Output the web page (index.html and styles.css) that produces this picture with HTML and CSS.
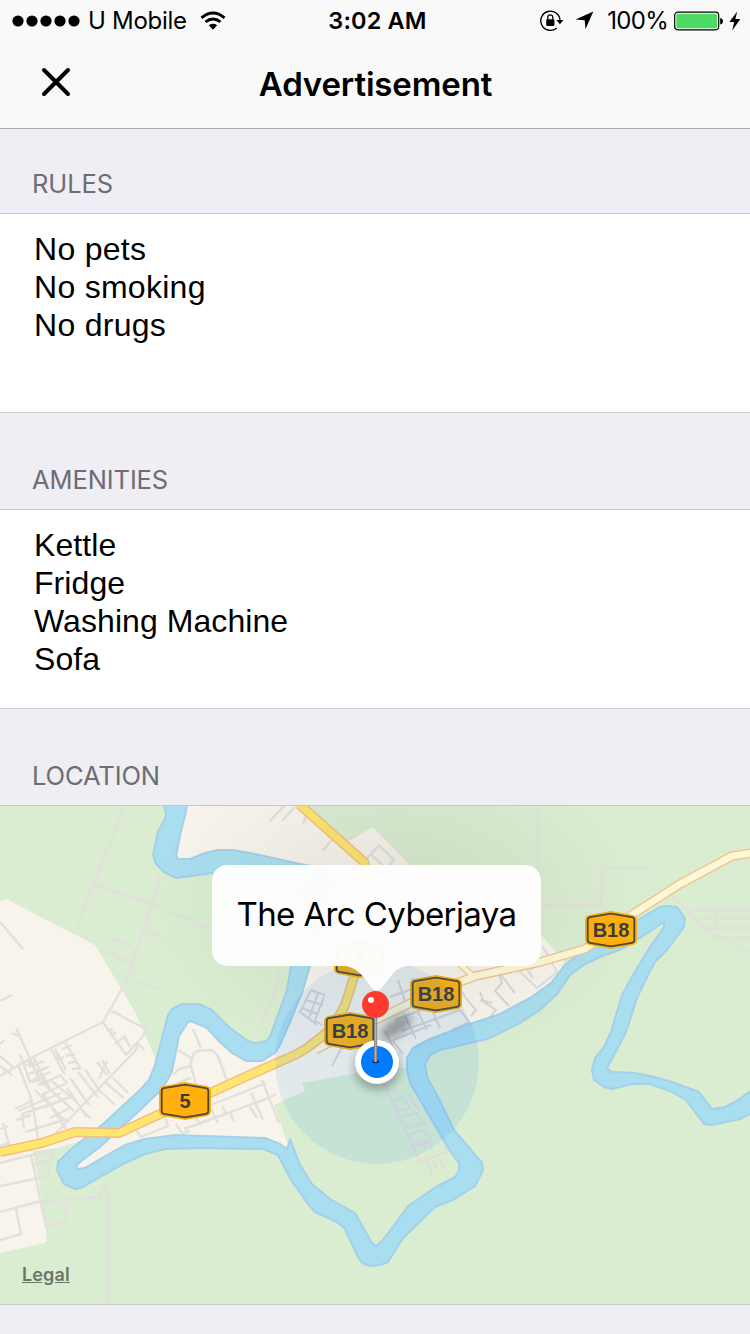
FILE: index.html
```html
<!DOCTYPE html>
<html lang="en">
<head>
<meta charset="utf-8">
<title>Advertisement</title>
<link rel="stylesheet" href="styles.css">
</head>
<body>
<header class="top">
  <div class="status">
    <div class="status-left">
      <svg class="signal" width="68" height="12" viewBox="0 0 68 12"><circle cx="6" cy="6" r="5.6"/><circle cx="20" cy="6" r="5.6"/><circle cx="34" cy="6" r="5.6"/><circle cx="48" cy="6" r="5.6"/><circle cx="62" cy="6" r="5.6"/></svg>
      <span class="carrier">U Mobile</span>
      <svg class="wifi" width="26" height="20" viewBox="0 0 26 20"><g fill="none" stroke="#000" stroke-width="2.9"><path d="M1.5 6.8Q13 -2.8 24.5 6.8"/><path d="M5.5 10.9Q13 4.9 20.5 10.9"/></g><path d="M8.8 14.2Q13 11.3 17.2 14.2L13 18.8Z"/></svg>
    </div>
    <span class="time">3:02 AM</span>
    <div class="status-right">
      <svg class="lock" width="24" height="22" viewBox="0 0 24 22"><path d="M16.8 17.9A9.6 9.6 0 1 1 20 10.5" fill="none" stroke="#000" stroke-width="1.4"/><path d="M16.3 10h7.2l-3.6 4.2z"/><rect x="6.2" y="9.3" width="8.2" height="6.6" rx=".8"/><path d="M7.8 9.5V7.3a2.5 2.5 0 0 1 5 0V9.5" fill="none" stroke="#000" stroke-width="1.3"/></svg>
      <svg class="arrow" width="19" height="19" viewBox="0 0 19 19"><path d="M18.3.5L10.5 18.3 9.7 9.3.5 8.4Z"/></svg>
      <span class="percent">100%</span>
      <svg class="battery" width="50" height="20" viewBox="0 0 50 20"><rect x=".7" y="1.2" width="44" height="17.6" rx="3.2" fill="#fff" stroke="#000" stroke-width="1.2"/><rect x="2.3" y="2.7" width="40.8" height="14.6" rx="1.6" fill="#4cd964"/><path d="M46.2 7q2.7.5 2.7 3.2t-2.7 3.2z"/></svg>
      <svg class="bolt" width="12" height="20" viewBox="0 0 12 20"><path d="M8.2.4L.4 11H5.2L3.2 19.4 11.4 8H6.4Z"/></svg>
    </div>
  </div>
  <div class="navbar">
    <svg class="close" width="30" height="30" viewBox="0 0 30 30"><path d="M3 3L27 27M27 3L3 27" stroke="#000" stroke-width="4" stroke-linecap="round"/></svg>
    <h1 class="title">Advertisement</h1>
    <span></span>
  </div>
</header>
<main>
  <h2 class="heading first">RULES</h2>
  <ul class="panel rules"><li>No pets</li><li>No smoking</li><li>No drugs</li></ul>
  <h2 class="heading">AMENITIES</h2>
  <ul class="panel"><li>Kettle</li><li>Fridge</li><li>Washing Machine</li><li>Sofa</li></ul>
  <h2 class="heading">LOCATION</h2>
  <div class="map">
    <svg class="map-art" width="750" height="498" viewBox="0 806 750 498">
      <defs>
        <radialGradient id="shade"><stop offset="0" stop-color="#5a6b55" stop-opacity=".14"/><stop offset=".45" stop-color="#5a6b55" stop-opacity=".075"/><stop offset="1" stop-color="#5a6b55" stop-opacity="0"/></radialGradient>
        <filter id="blur" x="-80%" y="-120%" width="260%" height="340%"><feGaussianBlur stdDeviation="5"/></filter>
        <filter id="edge" x="-10%" y="-10%" width="120%" height="130%"><feDropShadow dx="0" dy="0" stdDeviation=".7" flood-color="#000" flood-opacity=".35"/></filter>
        <linearGradient id="stem"><stop offset="0" stop-color="#777"/><stop offset=".5" stop-color="#b4b4b4"/><stop offset="1" stop-color="#777"/></linearGradient>
        <g id="shield"><path d="M-22-14.500L0-18.500 22-14.500Q25.500-14 25.500-10V10Q25.500 14 22 14.500L0 18.500-22 14.500Q-25.500 14-25.500 10V-10Q-25.500-14-22-14.500Z" fill="#ffb00d" stroke="#ffb00d"/><path d="M-21-12.800L0-16.300 21-12.800Q23.300-12.400 23.300-10V10Q23.300 12.400 21 12.800L0 16.300-21 12.800Q-23.300 12.400-23.300 10V-10Q-23.300-12.400-21-12.800Z" fill="none" stroke="#4b473a" stroke-width="1.8"/></g>
        <path id="road5" d="M299 804L364 862Q370 875 368 910L360 955 353 980 345 1005Q337 1022 325 1034L307 1048 297 1054 245 1077 210 1093 160 1114 119 1133 75 1132 42 1143 0 1152"/>
        <path id="b18" d="M752 853L732 856 680 884 630 916 585 949 540 962 476 976 435 991 382 1017 345 1035 315 1050"/>
        <path id="link" d="M366 868L430 937 473 976"/>
      </defs>
      <rect y="806" width="750" height="498" fill="#daedd1"/>
      <g fill="#f8f4ec">
        <path d="M0 901L6 899 95 945 119 985 135 1012 156 1060 150 1085 90 1138 57 1148 33 1151 42 1200 47 1240 45 1243 0 1253Z"/>
        <path d="M187 806H308L348 841 373 827 409 864 543 937 565 962 551 985 500 1014 407 1056 407 1068 385 1068 302 1083 305 1091 274 1105 290 1150 270 1143 170 1140 75 1175 75 1155 165 1085 180 1015 200 1012 240 1053 270 1053 300 975 315 880 250 860 172 865Z"/>
      </g>
      <g fill="none" stroke="#e3e0db" stroke-width="2.4" stroke-linejoin="round">
        <path d="M124 807L94 884 77 925M94 884L150 904 212 929M160 876L143 930 124 985 103 1022 33 1057 0 1076M142 922l12 5M143 929l26 12M111 938l9 3 13 7M102 950l26 11M115 957l12 6M128 969l16 6M125 976l47 19"/>
        <path d="M0 922L23 949M0 1001L12 995M16 1028L31 1061 42 1085M12 1033l7 3M18 1065L30 1095 35 1118 39 1146M33 1057l18 34M20 1054l10 28 12-6M24 1066l13-5M28 1074l13-5M32 1082l14-5"/>
        <path d="M27 1059l21 27M29 1067l15-6M32 1073l17-6M35 1078l16-6M37 1085l16-6M51 1049l14 26M55 1048l4 12 5-3M58 1054l8 16M65 1042l15 26M62 1049l10-4M66 1056l9-2M68 1063l7-1M72 1069l10-1"/>
        <path d="M103 1022l23 33 17-19 3-7-25-13-6-4-4 1M107 1031l6-2M110 1036l6-4M115 1044l9-7 5 7M124 1035l6 12M138 1042l-2 8-26 27-55 57M137 1043l7 6M97 1062l10 13M102 1060l8 14M107 1061l-8 18M98 1089l17 16M106 1083l18 15M113 1078l15 15M78 1072l20 25M85 1069l16 24M70 1078l19 27M67 1088l20 29M79 1107l12 12"/>
        <path d="M42 1085l18-10 7 8-24 11 23 35M24 1129l-2-15 49-17M25 1132l42-13M18 1111l43-18M16 1120l15-5M15 1109l18-9M35 1090l32 33M44 1084l30 27M50 1080l25 20M43 1108l25-10M50 1118l20-10M3 1123l8 28M0 1129l8-3M10 1143l-10 3M4 1040l-4 4M0 1056l15 13M0 1066l12 9"/>
        <path d="M0 1163l31-8 19-4 3 9-21 5M31 1155l15 72 21-6-3-16M0 1186l49-10-2-17M0 1212l37-10 62-5 3-9 3-3 3 8V1304M0 1240l21-6-5-25"/>
        <path d="M193 1029l8 19M190 1065l4-12q4-3 16-3 6 1 9 9l9 24M178 1050l13 8M173 1075l6-6 12-3 6 22M177 1083l14-5M136 1130l5 7 27-11-3-9M211 1105l55-22M211 1119l15-5M184 1129l82-30 10-5M176 1124l6 9 8-2M195 1117l6 8M222 1106l5 9M230 1113l4 8M250 1107l7 11M251 1093l12 27M262 1080l17 43M268 1098l6-3M210 1107l8 16"/>
        <path d="M281 968l-7 27-15 32M285 805l-16 17M295 807l-13 14M307 814l-4 10M332 840l-10 11M345 842l14-8M364 862l15-17 15 15-10 12M371 854l12 12"/>
        <path d="M538 808V930M504 906l97-1 1-37h49M602 905l4 10M673 896l35 35 42 21M690 916l4-6h56M716 910v18M700 918h50M700 928h50M713 938h37M527 950l-15 14 25 24 20-16-14-25M519 958l14 20M530 970l8-6"/>
      </g>
      <g fill="none" stroke="#d9d6d4" stroke-width="2">
        <path d="M311 990l-11 22 17 13M311 990l14 5M306 1000l17 5M302 1008l15 6M318 993l-9 25M324 997l-10 26M322 1025l-8-5"/>
        <path d="M398 980l10 30M412 978l12 32M390 997l50-18M395 1020l62-24M402 1031l58-21 9 12-17 8M404 1014l12 25M417 1010l10 20M430 1006l10 22M391 1041l40-16M393 1041l10 13M385 1031l13 25M462 992l6 9 8 9-5 6M480 992l4 10 12 8-8 9M480 1000l12 3M498 973l4 10-7 8 14 15M510 967l-9 8 14 18M345 1042l-9 16-4 8M343 1046l6 2"/>
        <path stroke="#e1dcda" d="M384 1083l36 79 27-10-3-6M391 1101l13-3 6 10-14 4M399 1118l17-5 8 10-19 5M407 1135l16-5 8 9-16 4M413 1147l17-5 2 8M427 1162l6 15M433 1160l4 9M439 1158l6 12M409 1094l10 17"/>
      </g>
      <path d="M187 804L186 812 180 835 176 856 178 859 190 859 205 853 218 850 233 850 250 853 300 864 325 868 334 885 330 910 318 940 310 966 303 990 290 1022 280 1045 275 1053 262 1061 246 1061 232 1053 220 1042 207 1028 191 1021 188 1022 179 1036 172 1071 167 1081 160 1091 139 1111 125 1124 100 1147 80 1162 77 1165 77 1169 85 1168 100 1159 125 1145 145 1139 175 1135 265 1138 280 1144 287 1149 290 1139 300 1165 312 1184 330 1199 355 1213 372 1243 376 1246 382 1241 395 1224 408 1206 436 1187 455 1177 459 1171 459 1163 450 1151 430 1117 410 1083 407 1070 407 1058 413 1048 430 1039 467 1025 500 1014 530 998 551 983 565 965 582 952 630 924 660 907 666 906 677 907 685 918 684 927 667 950 655 962 648 975 637 998 626 1032 614 1055 607 1068 612 1072 635 1073 655 1077 672 1082 699 1092 712 1109 725 1107 735 1102 752 1090V1113L740 1119 712 1125 704 1124 686 1100 670 1091 650 1084 633 1084 611 1089 604 1087 594 1080 592 1070 595 1058 604 1047 611 1032 622 995 633 975 650 947 664 927 664 922 640 938 622 949 600 957 585 964 570 975 558 993 540 1010 520 1023 500 1033 487 1039 440 1050 430 1055 425 1064 427 1077 440 1101 454 1130 482 1163 483 1170 475 1186 453 1200 435 1207 403 1238 388 1262 380 1265 370 1266 362 1263 358 1257 345 1229 337 1222 315 1212 308 1204 291 1180 278 1155 263 1149 200 1148 165 1149 145 1154 125 1163 95 1180 83 1187 75 1189 64 1184 57 1170 58 1162 70 1150 103 1124 140 1090 149 1080 155 1065 168 1015 172 1009 182 1004 199 1004 212 1010 230 1028 248 1041 255 1043 266 1041 270 1037 287 990 291 966 302 925 300 900 290 882 240 870 213 873 176 878 164 872 156 864 153 855 158 831 164 821 166 815 164 804Z" fill="#a9def0" stroke="#a3d0ea" stroke-width="2" stroke-linejoin="round"/>
      <g fill="none" stroke-linejoin="round">
        <g stroke="#f0c48f"><use href="#link" stroke-width="7"/><use href="#b18" stroke-width="9.5"/></g>
        <g stroke="#fef8d8"><use href="#link" stroke-width="4.5"/><use href="#b18" stroke-width="6.8"/></g>
        <use href="#road5" stroke="#f7bb7c" stroke-width="10"/><use href="#road5" stroke="#fee66f" stroke-width="7.2"/>
      </g>
      <g class="shield-label">
        <use href="#shield" x="360" y="959"/><text x="360" y="966">5</text>
        <use href="#shield" x="436" y="994"/><text x="436" y="1001">B18</text>
        <use href="#shield" x="350" y="1031"/><text x="350" y="1038">B18</text>
        <use href="#shield" x="611" y="930"/><text x="611" y="937">B18</text>
        <use href="#shield" x="185" y="1101"/><text x="185" y="1108">5</text>
      </g>
      <circle cx="377" cy="1062" r="102" fill="#007aff" opacity=".09"/>
      <ellipse cx="395" cy="905" rx="250" ry="165" fill="url(#shade)"/>
      <ellipse cx="396" cy="1027" rx="19" ry="8" transform="rotate(-35 396 1027)" fill="#000" opacity=".34" filter="url(#blur)"/>
      <circle cx="377" cy="1067" r="23" fill="#000" opacity=".28" filter="url(#blur)"/>
      <circle cx="377" cy="1062" r="22" fill="#fff"/><circle cx="377" cy="1062" r="16" fill="#007aff"/>
      <ellipse cx="375.5" cy="1061.500" rx="3.5" ry="1.6" fill="#062a52"/>
      <rect x="374" y="1016" width="3.2" height="46" fill="url(#stem)"/>
      <circle cx="375.5" cy="1004.500" r="13.5" fill="#ff3b30"/><circle cx="371" cy="1000" r="3" fill="#fff"/>
      <path d="M227 865H526A15 15 0 0 1 541 880V951A15 15 0 0 1 526 966H407Q397 967 389 979 380 991 376.500 991 373 991 365 979 356 967 345 966H227A15 15 0 0 1 212 951V880A15 15 0 0 1 227 865Z" fill="#fff" fill-opacity=".965" filter="url(#edge)"/>
    </svg>
    <span class="callout">The Arc Cyberjaya</span>
    <a class="legal">Legal</a>
  </div>
</main>
</body>
</html>
```
FILE: styles.css
```css
* { box-sizing: border-box; margin: 0; padding: 0; }
body { width: 750px; height: 1334px; overflow: hidden; background: #efeef4; color: #000; font-family: Inter, "Liberation Sans", sans-serif; }
svg { display: block; flex: none; }
.top { height: 129px; background: #f9f9f9; border-bottom: 1px solid #a9a8ae; }
.status { display: grid; grid-template-columns: 1fr auto 1fr; align-items: center; height: 40px; padding: 0 9px 0 12px; font-size: 24px; line-height: 40px; white-space: nowrap; }
.status-left, .status-right { display: flex; align-items: center; }
.status-right { justify-content: flex-end; }
.carrier { margin: 1px 0 0 8px; letter-spacing: -.3px; }
.wifi { margin-left: 13px; }
.time { margin: 1px 0 0 2px; font-weight: 600; font-size: 23.5px; letter-spacing: .15px; }
.lock { margin-right: 11px; }
.arrow { margin-right: 13px; }
.percent { margin: 1px 6px 0 0; letter-spacing: -.7px; }
.bolt { margin-left: 5px; }
.navbar { display: grid; grid-template-columns: 1fr auto 1fr; align-items: center; height: 88px; padding: 0 41px 0 41px; }
.close { margin-top: -4px; }
.title { padding-left: 1px; font-size: 33px; font-weight: 600; line-height: 88px; letter-spacing: -.15px; }
.heading { display: flex; align-items: flex-end; height: 97px; padding: 0 32px 13px; border-bottom: 1px solid #c8c7cc; font-size: 25.5px; font-weight: 400; line-height: 32px; letter-spacing: -.1px; color: #6d6d72; }
.heading.first { height: 85px; }
.panel { height: 199px; padding: 16px 34px 0; background: #fff; border-bottom: 1px solid #c8c7cc; list-style: none; font: 32px/38px "Liberation Sans", Arial, sans-serif; letter-spacing: .07px; }
.rules { letter-spacing: .28px; }
.map { position: relative; height: 499px; border-bottom: 1px solid #c8c7cc; }
.shield-label { font: bold 20px "Liberation Sans", Arial, sans-serif; text-anchor: middle; fill: #3d3a33; }
.callout { position: absolute; left: 212px; top: 59px; width: 329px; text-align: center; font-size: 33px; line-height: 98px; letter-spacing: -.6px; white-space: nowrap; }
.legal { position: absolute; left: 22px; top: 458px; font-size: 18px; line-height: 22px; font-weight: 600; letter-spacing: .15px; color: #6b7568; text-decoration: underline; }
```
